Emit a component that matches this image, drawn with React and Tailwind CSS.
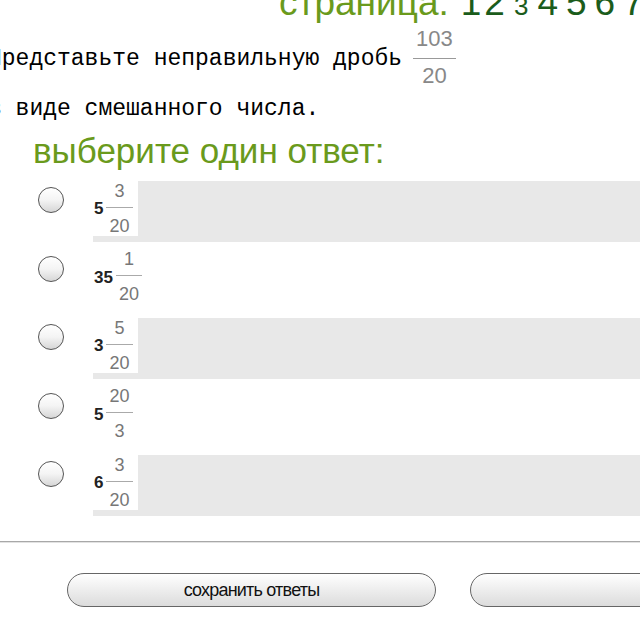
const options = [
    { whole: "5", num: "3", den: "20", shaded: true },
    { whole: "35", num: "1", den: "20", shaded: false },
    { whole: "3", num: "5", den: "20", shaded: true },
    { whole: "5", num: "20", den: "3", shaded: false },
    { whole: "6", num: "3", den: "20", shaded: true },
];

function MixedNumber({ whole, num, den }) {
    return (
        <div className="flex h-[55px] items-center bg-white pl-[1px] pr-[5px] font-['Liberation_Sans',Arial,sans-serif]">
            <span className="text-[17px] font-bold leading-none text-[#222]">{whole}</span>
            <div className="ml-[3px] flex flex-col items-center text-[18px] leading-[19px] text-[#777]">
                <span className="px-[3px]">{num}</span>
                <div className="mt-[6px] h-px w-full bg-[#aaa]"></div>
                <span className="mt-[9px] px-[3px]">{den}</span>
            </div>
        </div>
    );
}

function Radio() {
    return (
        <div className="h-[26px] w-[26px] rounded-full border-[1.5px] border-[#555] bg-linear-to-b from-white via-[#f4f4f4] to-[#d6d6d6]"></div>
    );
}

function App() {
    return (
        <div className="h-[640px] w-[640px] overflow-hidden bg-white font-['Liberation_Sans',Arial,sans-serif]">
            <div className="mt-[-16px] h-[37px] whitespace-nowrap pl-[279px] text-[37px] leading-[37px]">
                <span className="text-[#6a9a1c]">страница:</span>
                <span className="ml-[12px] text-[#1b5c1b]">1</span>
                <span className="ml-[3px] text-[#1b5c1b]">2</span>
                <span className="ml-[9px] text-[26px] text-[#1b5c1b]">3</span>
                <span className="ml-[9px] text-[#1b5c1b]">4</span>
                <span className="ml-[8px] text-[#1b5c1b]">5</span>
                <span className="ml-[8px] text-[#1b5c1b]">6</span>
                <span className="ml-[8px] text-[#1b5c1b]">7</span>
            </div>

            <div className="ml-[-12px] flex items-start whitespace-nowrap">
                <span className="pt-[25px] font-['Liberation_Mono','Courier_New',monospace] text-[23px] leading-[26px] text-black">
                    Представьте неправильную дробь
                </span>
                <div className="ml-[11px] flex flex-col items-center pt-[7px] text-[22px] leading-[22px] text-[#888]">
                    <span className="px-[3px]">103</span>
                    <div className="mt-[8px] h-px w-full bg-[#999]"></div>
                    <span className="mt-[6px]">20</span>
                </div>
            </div>
            <div className="ml-[-12px] mt-[9px] whitespace-nowrap font-['Liberation_Mono','Courier_New',monospace] text-[23px] leading-[26px] text-black">
                в виде смешанного числа.
            </div>

            <div className="mt-[11px] pl-[33px] text-[35px] leading-[35px] text-[#6a9a1c]">выберите один ответ:</div>

            <div className="mt-[13px] flex flex-col gap-[7.5px]">
                {options.map((o, i) => (
                    <div key={i} className="flex h-[61px]">
                        <div className="w-[93px] shrink-0 pl-[38px] pt-[6px]">
                            <Radio />
                        </div>
                        <div className={"flex-1 " + (o.shaded ? "bg-[#e8e8e8]" : "bg-white")}>
                            <div className="w-fit">
                                <MixedNumber whole={o.whole} num={o.num} den={o.den} />
                            </div>
                        </div>
                    </div>
                ))}
            </div>

            <div className="mt-[25px] h-px bg-[#a8a8a8]"></div>
            <div className="h-px bg-[#e2e2e2]"></div>

            <div className="mt-[30px] flex whitespace-nowrap">
                <button className="ml-[67px] h-[34px] w-[369px] shrink-0 rounded-full border-[1.5px] border-[#666] bg-linear-to-b from-white to-[#dcdcdc] text-[18px] tracking-[-0.8px] text-[#111]">
                    сохранить ответы
                </button>
                <button className="ml-[34px] h-[34px] w-[369px] shrink-0 rounded-full border-[1.5px] border-[#666] bg-linear-to-b from-white to-[#dcdcdc] text-[18px] text-[#111]"></button>
            </div>
        </div>
    );
}

export default App;
